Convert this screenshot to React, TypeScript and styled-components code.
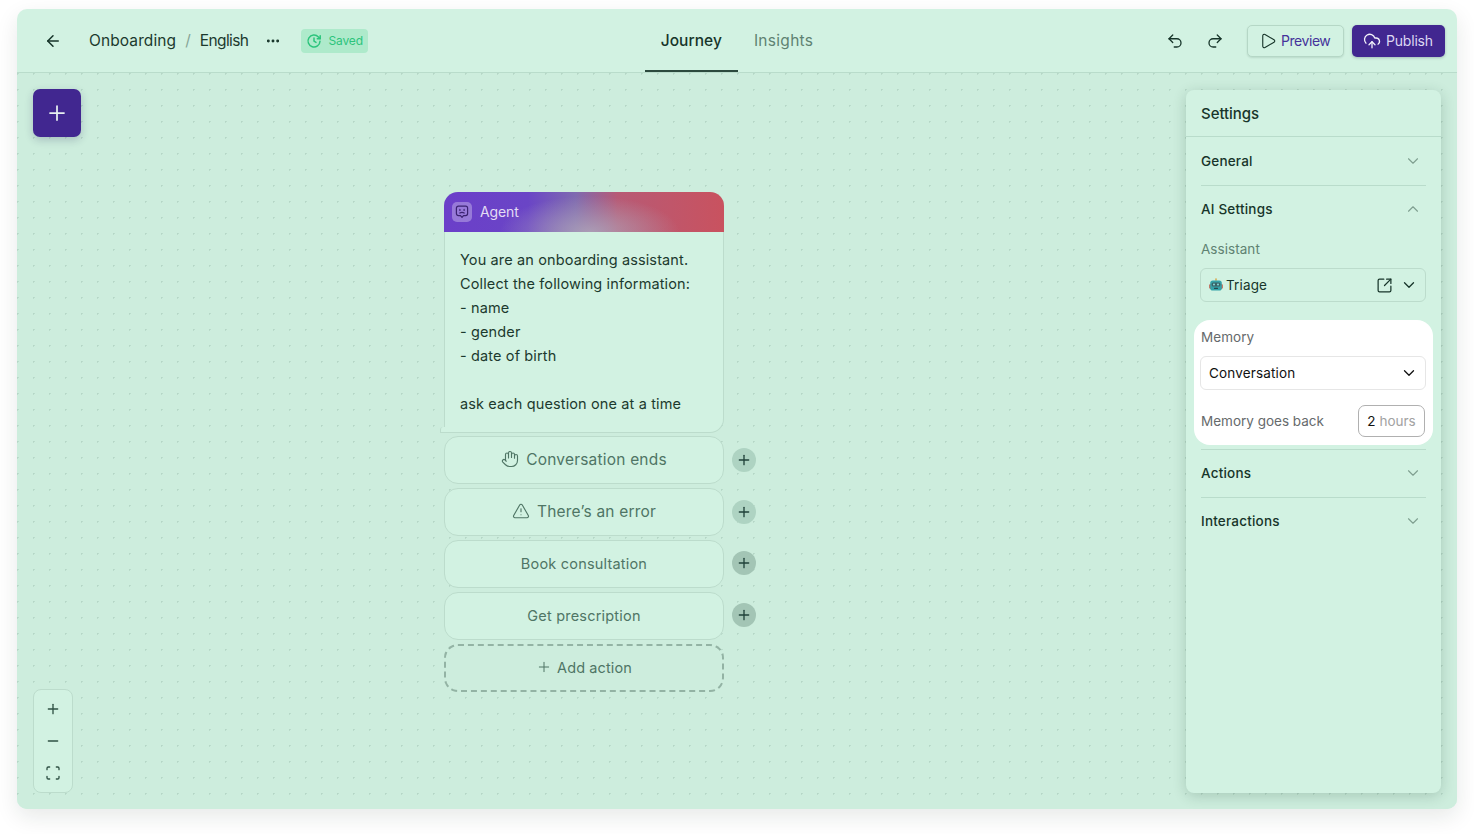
import React from 'react';
import styled, { createGlobalStyle } from 'styled-components';
import {
  ArrowLeft,
  ChevronDown,
  ChevronUp,
  CloudUpload,
  Ellipsis,
  Hand,
  Minus,
  Play,
  Plus,
  Redo2,
  Scan,
  SquareArrowOutUpRight,
  TriangleAlert,
  Undo2,
} from 'lucide-react';

const GlobalStyle = createGlobalStyle`
  html, body {
    margin: 0;
    padding: 0;
    background: #fff;
    font-family: "Inter", "Noto Sans", sans-serif;
  }
  * { box-sizing: border-box; }
`;

const Page = styled.div`
  width: 1474px;
  height: 834px;
  padding: 9px 17px 25px;
  overflow: hidden;
`;

const Window = styled.div`
  width: 1440px;
  height: 800px;
  border-radius: 10px;
  background: #d2f2e2;
  box-shadow: 0 8px 22px rgba(20, 40, 30, 0.1);
  display: flex;
  flex-direction: column;
  overflow: hidden;
`;

const Header = styled.header`
  height: 64px;
  flex: none;
  display: grid;
  grid-template-columns: 1fr auto 1fr;
  align-items: center;
  border-bottom: 1px solid #b9dccb;
  padding: 0 12px;
`;

const HeaderLeft = styled.div`
  display: flex;
  align-items: center;
  padding-left: 15px;
  color: #17352a;
`;

const Crumbs = styled.div`
  display: flex;
  align-items: center;
  margin-left: 27px;
  font-size: 15.5px;
  color: #1c3a2e;
`;

const Crumb = styled.span<{ $tight?: boolean }>`
  letter-spacing: ${(p) => (p.$tight ? '-0.6px' : '0.1px')};
`;

const Slash = styled.span`
  color: #86a597;
  margin: 0 9px;
`;

const MoreButton = styled.span`
  display: flex;
  margin: 0 20px 0 17px;
  color: #17352a;
`;

const SavedBadge = styled.span`
  display: flex;
  align-items: center;
  gap: 6px;
  height: 24px;
  padding: 0 5px;
  border-radius: 4px;
  background: #aeeacb;
  color: #2cc47c;
  font-size: 12px;
  letter-spacing: -0.1px;
`;

const Tabs = styled.nav`
  display: flex;
  height: 63px;
`;

const Tab = styled.a<{ $active?: boolean }>`
  display: flex;
  align-items: center;
  padding: 0 16px;
  font-size: 15.5px;
  letter-spacing: ${(p) => (p.$active ? '0.05px' : '0.3px')};
  color: ${(p) => (p.$active ? '#17352a' : '#5f8272')};
  font-weight: ${(p) => (p.$active ? 500 : 400)};
  box-shadow: ${(p) => (p.$active ? 'inset 0 -2px 0 #2c4a3e' : 'none')};
`;

const HeaderRight = styled.div`
  display: flex;
  align-items: center;
  justify-content: flex-end;
`;

const HistoryButton = styled.span`
  display: flex;
  width: 40px;
  justify-content: center;
  color: #17352a;
`;

const PreviewButton = styled.button`
  display: flex;
  align-items: center;
  gap: 4px;
  height: 32px;
  width: 97px;
  margin: 0 8px 0 12px;
  padding: 0 0 0 11px;
  border: 1px solid #b5d7c6;
  border-radius: 5px;
  background: #d2f2e2;
  box-shadow: 0 1px 2px rgba(20, 40, 30, 0.12);
  color: #45329a;
  font: 400 14px "Inter", sans-serif;
  letter-spacing: -0.45px;

  svg { color: #17352a; }
`;

const PublishButton = styled.button`
  display: flex;
  align-items: center;
  gap: 5px;
  height: 32px;
  width: 93px;
  padding: 0 0 0 11px;
  border: none;
  border-radius: 5px;
  background: #412790;
  box-shadow: 0 1px 3px rgba(20, 20, 60, 0.25);
  color: #dcd8f2;
  font: 400 14px "Inter", sans-serif;
  letter-spacing: -0.2px;

  svg { color: #f2f2fa; }
`;

const Canvas = styled.main`
  position: relative;
  flex: 1;
  background-color: #cdeddd;
  background-image: radial-gradient(circle at 0.75px 0.75px, #b5d6c6 0.7px, transparent 1.05px);
  background-size: 16px 16px;
`;

const AddNodeButton = styled.button`
  position: absolute;
  left: 16px;
  top: 16px;
  width: 48px;
  height: 48px;
  display: flex;
  align-items: center;
  justify-content: center;
  border: none;
  border-radius: 7px;
  background: #412790;
  box-shadow: 0 3px 8px rgba(30, 30, 80, 0.22);
  color: #e6f0f0;
`;

const ZoomControls = styled.div`
  position: absolute;
  left: 16px;
  top: 616px;
  width: 40px;
  height: 104px;
  padding: 3px 0;
  display: flex;
  flex-direction: column;
  align-items: center;
  justify-content: space-around;
  border: 1px solid #bcdccc;
  border-radius: 8px;
  background: #d2f2e2;
  color: #2f5144;
`;

const Node = styled.section`
  position: absolute;
  left: 427px;
  top: 119px;
  width: 312px;
  display: flex;
  flex-direction: column;
  gap: 4px;
`;

const AgentCard = styled.div`
  position: relative;
  width: 280px;
  height: 241px;
  margin-bottom: -1px;
  border: 1px solid #bcdccc;
  border-top: none;
  border-radius: 14px 14px 14px 0;
  background: #d2f2e2;

  &::after {
    content: '';
    position: absolute;
    left: -5px;
    bottom: -1px;
    width: 8px;
    height: 5px;
    border-radius: 3px 0 0 0;
    border-left: 1px solid #bcdccc;
    border-bottom: 1px solid #bcdccc;
    background: #d2f2e2;
  }
`;

const AgentHeader = styled.div`
  height: 40px;
  margin: 0 -1px;
  padding: 0 0 1px 8px;
  display: flex;
  align-items: center;
  gap: 8px;
  border-radius: 14px 14px 0 0;
  color: #e2dcf4;
  font-size: 14px;
  letter-spacing: -0.1px;
  background:
    radial-gradient(ellipse 90px 36px at 52% 100%, rgba(175, 165, 185, 0.85), rgba(175, 165, 185, 0) 100%),
    linear-gradient(90deg, #6b3fc9 0%, #6a45c6 30%, #7f6ab0 47%, #b75a75 62%, #c9525f 100%);
`;

const AgentBadge = styled.span`
  width: 20px;
  height: 20px;
  display: flex;
  align-items: center;
  justify-content: center;
  border-radius: 5px;
  background: rgba(255, 255, 255, 0.3);
`;

const Prompt = styled.div`
  padding: 16px 15px;
  font-size: 14.5px;
  line-height: 24px;
  letter-spacing: 0.13px;
  color: #1c3a2e;
  white-space: pre-line;
`;

const ActionRow = styled.div`
  display: flex;
  align-items: center;
  gap: 8px;
`;

const ActionCard = styled.div<{ $large?: boolean }>`
  width: 280px;
  height: 48px;
  padding-bottom: 2px;
  display: flex;
  align-items: center;
  justify-content: center;
  gap: 7px;
  border: 1px solid #bcdccc;
  border-radius: 14px;
  background: #d2f2e2;
  color: #4f7565;
  font-size: ${(p) => (p.$large ? 15.5 : 14.5)}px;
  letter-spacing: 0.2px;
`;

const AddActionCard = styled(ActionCard)`
  gap: 5px;
  border: 2px dashed #93b3a4;
  background: #cdeddd;
  letter-spacing: 0.1px;
`;

const CircleAdd = styled.span<{ $raised?: boolean }>`
  width: 24px;
  height: 24px;
  margin-top: ${(p) => (p.$raised ? -2 : 0)}px;
  display: flex;
  align-items: center;
  justify-content: center;
  border-radius: 50%;
  background: ${(p) => (p.$raised ? '#a3c5b5' : '#aed3c2')};
  color: #20423a;
`;

const Settings = styled.aside`
  position: absolute;
  right: 16px;
  top: 17px;
  width: 255px;
  height: 703px;
  border-radius: 8px;
  background: #d2f2e2;
  box-shadow: 0 3px 14px rgba(20, 60, 40, 0.2);
  display: flex;
  flex-direction: column;
`;

const SettingsTitle = styled.h2`
  margin: 0;
  height: 47px;
  flex: none;
  padding-left: 15px;
  display: flex;
  align-items: center;
  border-bottom: 1px solid #b9dccb;
  font-size: 15px;
  font-weight: 500;
  letter-spacing: -0.05px;
  color: #17352a;
`;

const SectionList = styled.div`
  padding: 0 15px;
  display: flex;
  flex-direction: column;
`;

const SectionRow = styled.div<{ $height: number; $divided?: boolean }>`
  height: ${(p) => p.$height}px;
  flex: none;
  display: flex;
  align-items: center;
  justify-content: space-between;
  padding-right: 4px;
  border-bottom: ${(p) => (p.$divided ? '1px solid #b9dccb' : 'none')};
  color: #17352a;
  font-size: 13.5px;
  font-weight: 500;
  letter-spacing: 0.2px;

  svg { color: #7f9f90; }
`;

const FieldLabel = styled.div`
  height: 16px;
  margin-top: 9px;
  line-height: 16px;
  font-size: 13.5px;
  letter-spacing: 0.05px;
  color: #5f8272;
`;

const SelectBox = styled.div<{ $light?: boolean }>`
  height: 34px;
  margin: 11px 0 0 -1px;
  padding: 0 7px 0 8px;
  display: flex;
  align-items: center;
  border: 1px solid ${(p) => (p.$light ? '#e6e6e6' : '#bcdccc')};
  border-radius: 6px;
  font-size: 13.5px;
  letter-spacing: 0.15px;
  color: ${(p) => (p.$light ? '#111' : '#17352a')};

  svg { flex: none; }
`;

const SelectValue = styled.span`
  flex: 1;
  display: flex;
  align-items: center;
  gap: 3px;
`;

const OpenLink = styled.span`
  display: flex;
  margin-right: 7px;
`;

const MemoryBlock = styled.div`
  margin: 18px -7px 4px;
  height: 125px;
  padding: 9px 7px 0;
  border-radius: 16px;
  background: #fff;
`;

const MemoryLabel = styled(FieldLabel)`
  margin-top: 0;
  color: #666a6c;
`;

const MemoryRow = styled.div`
  margin-top: 15px;
  display: flex;
  align-items: center;
  justify-content: space-between;
  font-size: 13.5px;
  color: #666a6c;
`;

const HoursInput = styled.div`
  width: 67px;
  height: 32px;
  margin-right: 1px;
  display: flex;
  align-items: center;
  justify-content: center;
  gap: 4px;
  border: 1px solid #b0b0b0;
  border-radius: 7px;
  color: #111;
  font-size: 13.5px;
`;

const HoursUnit = styled.span`
  color: #a2a2a2;
`;

const Rule = styled.div`
  height: 1px;
  flex: none;
  margin-bottom: -1px;
  background: #b9dccb;
`;

const SavedIcon = () => (
  <svg width="16" height="16" viewBox="0 0 16 16" fill="none" stroke="currentColor" strokeWidth="1.5" strokeLinecap="round" strokeLinejoin="round">
    <path d="M14 8.2A6 6 0 1 1 12.4 3.9L14 5.6" />
    <path d="M14.2 2.8v2.9h-2.9" />
    <path d="M8 5v3.2l2 1.2" />
  </svg>
);

const AgentIcon = () => (
  <svg width="14" height="14" viewBox="0 0 14 14" fill="none" stroke="#3a2270" strokeWidth="1.2" strokeLinecap="round" strokeLinejoin="round">
    <path d="M3.4 1.2h7.2a2 2 0 0 1 2 2v5.4a2 2 0 0 1-2 2H8.5L7 12.4 5.5 10.6H3.4a2 2 0 0 1-2-2V3.2a2 2 0 0 1 2-2Z" />
    <path d="M4.9 4.4v1M9.1 4.4v1" />
    <path d="M4.8 8c1.3-.7 3.1-.7 4.4 0" />
  </svg>
);

const RobotIcon = () => (
  <svg width="14" height="14" viewBox="0 0 14 14">
    <rect x="6.3" y="0.4" width="1.4" height="2.4" fill="#d9a441" />
    <rect x="0.2" y="6" width="13.6" height="5" rx="1.4" fill="#c05a4a" />
    <rect x="1.2" y="2.4" width="11.6" height="10.2" rx="2.6" fill="#35a2a8" />
    <rect x="2.6" y="4.4" width="8.8" height="4.2" rx="1.6" fill="#3a6468" />
    <circle cx="5" cy="6.5" r="0.9" fill="#8fe6e6" />
    <circle cx="9" cy="6.5" r="0.9" fill="#8fe6e6" />
    <rect x="5" y="9.8" width="4" height="1.1" rx="0.5" fill="#27484e" />
  </svg>
);

const prompt = `You are an onboarding assistant.
Collect the following information:
- name
- gender
- date of birth

ask each question one at a time`;

const actions = [
  { label: 'Conversation ends', icon: <Hand size={18} strokeWidth={1.5} /> },
  { label: 'There’s an error', icon: <TriangleAlert size={18} strokeWidth={1.5} /> },
  { label: 'Book consultation' },
  { label: 'Get prescription' },
];

const App: React.FC = () => {
  return (
    <Page>
      <GlobalStyle />
      <Window>
        <Header>
          <HeaderLeft>
            <ArrowLeft size={18} strokeWidth={2} />
            <Crumbs>
              <Crumb>Onboarding</Crumb>
              <Slash>/</Slash>
              <Crumb $tight>English</Crumb>
            </Crumbs>
            <MoreButton>
              <Ellipsis size={16} strokeWidth={2.4} />
            </MoreButton>
            <SavedBadge>
              <SavedIcon />
              Saved
            </SavedBadge>
          </HeaderLeft>
          <Tabs>
            <Tab $active>Journey</Tab>
            <Tab>Insights</Tab>
          </Tabs>
          <HeaderRight>
            <HistoryButton>
              <Undo2 size={18} strokeWidth={1.75} />
            </HistoryButton>
            <HistoryButton>
              <Redo2 size={18} strokeWidth={1.75} />
            </HistoryButton>
            <PreviewButton>
              <Play size={18} strokeWidth={1.5} />
              Preview
            </PreviewButton>
            <PublishButton>
              <CloudUpload size={18} strokeWidth={1.75} />
              Publish
            </PublishButton>
          </HeaderRight>
        </Header>
        <Canvas>
          <AddNodeButton>
            <Plus size={24} strokeWidth={1.75} />
          </AddNodeButton>
          <ZoomControls>
            <Plus size={16} strokeWidth={2} />
            <Minus size={16} strokeWidth={2} />
            <Scan size={16} strokeWidth={2} />
          </ZoomControls>
          <Node>
            <AgentCard>
              <AgentHeader>
                <AgentBadge>
                  <AgentIcon />
                </AgentBadge>
                Agent
              </AgentHeader>
              <Prompt>{prompt}</Prompt>
            </AgentCard>
            {actions.map((action, index) => (
              <ActionRow key={action.label}>
                <ActionCard $large={!!action.icon}>
                  {action.icon}
                  {action.label}
                </ActionCard>
                <CircleAdd $raised={index > 1}>
                  <Plus size={16} strokeWidth={2} />
                </CircleAdd>
              </ActionRow>
            ))}
            <ActionRow>
              <AddActionCard>
                <Plus size={16} strokeWidth={1.5} />
                Add action
              </AddActionCard>
            </ActionRow>
          </Node>
          <Settings>
            <SettingsTitle>Settings</SettingsTitle>
            <SectionList>
              <SectionRow $height={49} $divided>
                General
                <ChevronDown size={18} strokeWidth={1.5} />
              </SectionRow>
              <SectionRow $height={46}>
                AI Settings
                <ChevronUp size={18} strokeWidth={1.5} />
              </SectionRow>
              <FieldLabel>Assistant</FieldLabel>
              <SelectBox>
                <SelectValue>
                  <RobotIcon />
                  Triage
                </SelectValue>
                <OpenLink>
                  <SquareArrowOutUpRight size={17} strokeWidth={1.75} />
                </OpenLink>
                <ChevronDown size={18} strokeWidth={1.75} />
              </SelectBox>
              <MemoryBlock>
                <MemoryLabel>Memory</MemoryLabel>
                <SelectBox $light>
                  <SelectValue>Conversation</SelectValue>
                  <ChevronDown size={18} strokeWidth={1.75} />
                </SelectBox>
                <MemoryRow>
                  Memory goes back
                  <HoursInput>
                    2 <HoursUnit>hours</HoursUnit>
                  </HoursInput>
                </MemoryRow>
              </MemoryBlock>
              <Rule />
              <SectionRow $height={49} $divided>
                Actions
                <ChevronDown size={18} strokeWidth={1.5} />
              </SectionRow>
              <SectionRow $height={46}>
                Interactions
                <ChevronDown size={18} strokeWidth={1.5} />
              </SectionRow>
            </SectionList>
          </Settings>
        </Canvas>
      </Window>
    </Page>
  );
};

export default App;
